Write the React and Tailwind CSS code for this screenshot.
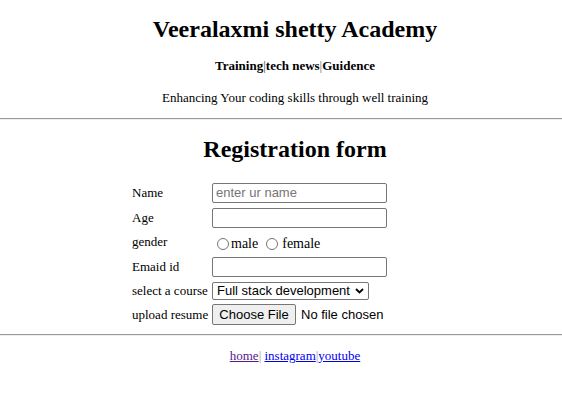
export default function App() {
  return (
    <div className="min-h-[411px] bg-white text-black font-['Liberation_Serif',serif]">
      <div className="pt-[14px] pl-[28px] text-center">
        <h1 className="text-[24px] leading-[30px] font-bold">Veeralaxmi shetty Academy</h1>
        <p className="mt-[14px] text-[13px] leading-[16px] font-bold">
          Training<span className="font-normal text-[#444]">|</span>tech news<span className="font-normal text-[#666]">|</span>Guidence
        </p>
        <p className="mt-[16px] text-[13px] leading-[16px]">Enhancing Your coding skills through well training</p>
      </div>

      <hr className="mt-[12px] border-t border-b border-t-[#9a9a9a] border-b-[#eeeeee]" />

      <h2 className="mt-[14px] pl-[28px] text-center text-[24px] leading-[30px] font-bold">Registration form</h2>

      <form className="mt-[16px] ml-[130px] grid grid-cols-[82px_auto] text-[13px] w-max">
        <label className="pl-[2px] h-[25px] flex items-center">Name</label>
        <div className="h-[25px] flex items-center">
          <input
            placeholder="enter ur name"
            className="w-[175px] h-[20px] px-[3px] border border-[#767676] rounded-[2px] font-['Liberation_Sans',sans-serif] text-[13px] placeholder:text-[#757575] outline-none"
          />
        </div>

        <label className="pl-[2px] h-[25px] flex items-center">Age</label>
        <div className="h-[25px] flex items-center">
          <input className="w-[175px] h-[20px] px-[3px] border border-[#767676] rounded-[2px] outline-none" />
        </div>

        <label className="pl-[2px] h-[24px] flex items-center">gender</label>
        <div className="h-[24px] flex items-center pt-[3px] text-[14px]">
          <span className="ml-[5px] w-[12px] h-[12px] rounded-full border border-[#767676]" />
          <span className="ml-[2px]">male</span>
          <span className="ml-[8px] w-[12px] h-[12px] rounded-full border border-[#767676]" />
          <span className="ml-[4px]">female</span>
        </div>

        <label className="pl-[2px] h-[25px] flex items-center">Emaid id</label>
        <div className="h-[25px] flex items-center">
          <input className="w-[175px] h-[20px] px-[3px] border border-[#767676] rounded-[2px] outline-none" />
        </div>

        <label className="pl-[2px] h-[23px] flex items-center">select a course</label>
        <div className="h-[23px] flex items-center">
          <div className="w-[157px] h-[18px] pl-[4px] pr-[4px] border border-[#767676] rounded-[2px] flex items-center justify-between font-['Liberation_Sans',sans-serif] text-[13px]">
            <span>Full stack development</span>
            <svg width="9" height="6" viewBox="0 0 9 6" fill="none">
              <path d="M1 1l3.5 3.5L8 1" stroke="black" strokeWidth="1.8" />
            </svg>
          </div>
        </div>

        <label className="pl-[2px] h-[25px] flex items-center">upload resume</label>
        <div className="h-[25px] flex items-center font-['Liberation_Sans',sans-serif] text-[13px]">
          <button type="button" className="w-[84px] h-[21px] bg-[#efefef] border border-[#767676] rounded-[2px]">
            Choose File
          </button>
          <span className="ml-[5px]">No file chosen</span>
        </div>
      </form>

      <hr className="mt-[7px] border-t border-b border-t-[#9a9a9a] border-b-[#eeeeee]" />

      <p className="mt-[12px] pl-[28px] text-center text-[13px] leading-[16px]">
        <a href="#" className="underline text-[#551a8b]">home</a>
        <span className="text-[#999]">|</span>{" "}
        <a href="#" className="underline text-[#0000ee]">instagram</a>
        <span className="text-[#999]">|</span>
        <a href="#" className="underline text-[#0000ee]">youtube</a>
      </p>
    </div>
  );
}
